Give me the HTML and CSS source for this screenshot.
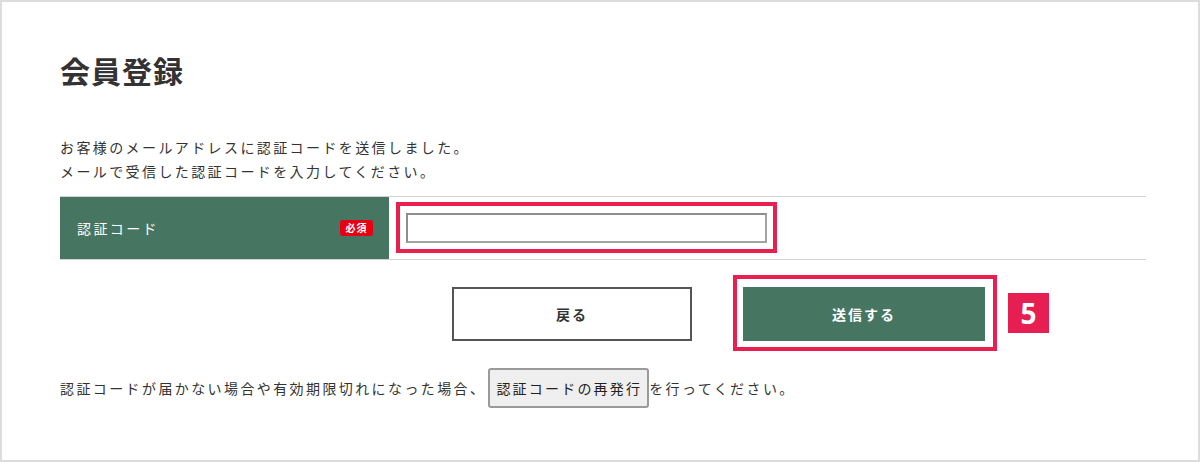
FILE: index.html
```html
<!DOCTYPE html>
<html lang="ja">
<head>
<meta charset="utf-8">
<title>会員登録</title>
<link rel="stylesheet" href="styles.css">
</head>
<body>
<div class="page">
  <h1 class="title">会員登録</h1>
  <p class="lead">お客様のメールアドレスに認証コードを送信しました。<br>メールで受信した認証コードを入力してください。</p>
  <div class="form-row">
    <div class="form-label">
      <span class="label-text">認証コード</span>
      <span class="required">必須</span>
    </div>
    <div class="form-field">
      <div class="mark-box mark-input">
        <input class="code-input" type="text">
      </div>
    </div>
  </div>
  <div class="actions">
    <button class="btn btn-back" type="button">戻る</button>
    <div class="mark-box mark-submit">
      <button class="btn btn-submit" type="button">送信する</button>
    </div>
    <span class="step">5</span>
  </div>
  <div class="resend">
    <span class="resend-text">認証コードが届かない場合や有効期限切れになった場合、</span><button class="resend-btn" type="button">認証コードの再発行</button><span class="resend-text">を行ってください。</span>
  </div>
</div>
</body>
</html>
```
FILE: styles.css
```css
* { box-sizing: border-box; }
html, body { margin: 0; padding: 0; background: #fff; }
body {
  font-family: "Noto Sans CJK JP", "Noto Sans", sans-serif;
  color: #333;
}
.page {
  width: 1200px;
  height: 462px;
  border: 2px solid #dcdcdc;
  padding: 48px 52px 0 58px;
}
.title {
  margin: 0;
  font-size: 30px;
  line-height: 40px;
  font-weight: 700;
  letter-spacing: 1px;
  color: #333;
}
.lead {
  margin: 45px 0 0;
  font-size: 14px;
  line-height: 24px;
  letter-spacing: 2.4px;
  color: #333;
}
.form-row {
  margin-top: 13px;
  display: flex;
  border-top: 1px solid #d2d2d2;
  border-bottom: 1px solid #d2d2d2;
  height: 64px;
}
.form-label {
  width: 329px;
  background: #467662;
  display: flex;
  align-items: center;
  justify-content: space-between;
  padding: 0 16px 0 17px;
}
.label-text {
  color: #fff;
  font-size: 14px;
  letter-spacing: 2.4px;
}
.required {
  background: #e60012;
  color: #fff;
  font-size: 10px;
  font-weight: 700;
  line-height: 16px;
  width: 33px;
  height: 16px;
  text-align: center;
  border-radius: 3px;
  letter-spacing: 1px;
}
.form-field {
  flex: 1;
  padding: 5px 7px;
}
.mark-box {
  display: inline-block;
  border: 4px solid #e8204f;
}
.mark-input {
  padding: 7px 6px 6px 6px;
}
.code-input {
  display: block;
  width: 361px;
  height: 30px;
  border: 2px solid #a3a3a3;
  border-top-color: #8e8e8e;
  border-left-color: #8e8e8e;
  background: #fff;
  margin: 0;
  padding: 0 4px;
  font-size: 14px;
  outline: none;
}
.actions {
  margin-top: 15px;
  display: flex;
  align-items: center;
  padding-left: 392px;
  height: 76px;
}
.btn {
  width: 240px;
  height: 54px;
  font-family: "Noto Sans CJK JP", "Noto Sans", sans-serif;
  font-size: 14px;
  font-weight: 700;
  letter-spacing: 2px;
  margin: 0;
  padding: 0;
  cursor: pointer;
}
.btn-back {
  background: #fff;
  border: 2px solid #555;
  color: #333;
  margin-right: 41px;
  align-self: flex-start;
  margin-top: 12px;
}
.mark-submit {
  padding: 8px 8px 6px 6px;
}
.btn-submit {
  display: block;
  width: 242px;
  background: #467662;
  border: none;
  color: #fff;
}
.step {
  margin-left: 11px;
  width: 41px;
  height: 40px;
  background: #e61e51;
  color: #fff;
  font-family: "Open Sans", "Noto Sans", sans-serif;
  font-size: 28px;
  font-weight: 700;
  line-height: 40px;
  text-align: center;
}
.resend {
  margin-top: 17px;
  display: flex;
  align-items: center;
  height: 40px;
}
.resend-text {
  font-size: 14px;
  letter-spacing: 2.4px;
  color: #333;
}
.resend-btn {
  margin-left: 2px;
  height: 40px;
  padding: 0 5px 0 6px;
  background: #efefef;
  border: 2px solid #9a9a9a;
  border-radius: 3px;
  font-family: "Noto Sans CJK JP", "Noto Sans", sans-serif;
  font-size: 14px;
  letter-spacing: 2.2px;
  color: #222;
  white-space: nowrap;
}
```
